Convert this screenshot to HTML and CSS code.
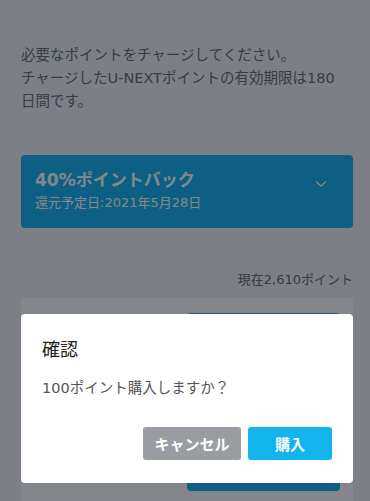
FILE: index.html
```html
<!doctype html>
<html lang="ja">
  <head>
    <meta charset="UTF-8" />
    <meta name="viewport" content="width=device-width, initial-scale=1.0" />
    <title>ポイントチャージ</title>
    <link rel="stylesheet" href="styles.css">
  </head>
  <body>
    <div class="page">
      <p class="intro">
        必要なポイントをチャージしてください。<br />
        チャージしたU-NEXTポイントの有効期限は180日間です。
      </p>

      <div class="campaign">
        <div class="campaign-text">
          <h2>40%ポイントバック</h2>
          <p>還元予定日:2021年5月28日</p>
        </div>
        <svg class="chevron" width="12" height="8" viewBox="0 0 12 8">
          <path d="M1 1.5 L6 6 L11 1.5" fill="none" stroke="currentColor" stroke-width="1.4" />
        </svg>
      </div>

      <p class="current">現在2,610ポイント</p>

      <div class="plans">
        <div class="plan-row">
          <button class="plan-btn"></button>
        </div>
      </div>
    </div>

    <!-- 確認ダイアログ -->
    <div class="overlay">
      <div class="dialog">
        <h3>確認</h3>
        <p>100ポイント購入しますか？</p>
        <div class="dialog-actions">
          <button class="btn btn-cancel">キャンセル</button>
          <button class="btn btn-buy">購入</button>
        </div>
      </div>
    </div>
  </body>
</html>
```

FILE: styles.css
```css
* {
  margin: 0;
  padding: 0;
  box-sizing: border-box;
}

body {
  font-family: "DejaVu Sans", "Noto Sans CJK JP", sans-serif;
  background: #f0f2f5;
  color: #555;
  height: 501px;
  overflow: hidden;
}

.page {
  padding: 44px 17px 0 21px;
}

.intro {
  font-size: 14.5px;
  line-height: 23px;
  color: #666a70;
  padding-right: 4px;
  margin-bottom: 42px;
}

.campaign {
  background: #12b2ee;
  border-radius: 4px;
  padding: 13px 14px 14px;
  display: flex;
  align-items: center;
  justify-content: space-between;
  color: #fff;
}

.campaign h2 {
  font-size: 17px;
  font-weight: 700;
  line-height: 24px;
}

.campaign p {
  font-size: 13px;
  line-height: 22px;
}

.chevron {
  margin-right: 12px;
  margin-top: -14px;
}

.current {
  text-align: right;
  font-size: 13px;
  color: #666;
  margin-top: 42px;
  line-height: 20px;
}

.plans {
  margin-top: 8px;
  background: #fff;
  height: 220px;
  padding: 15px 13px;
}

.plan-row {
  display: flex;
  justify-content: flex-end;
}

.plan-btn {
  width: 153px;
  height: 178px;
  border: none;
  border-radius: 4px;
  background: #12b2ee;
}

.overlay {
  position: fixed;
  inset: 0;
  background: rgba(8, 14, 24, 0.5);
  display: flex;
  align-items: flex-end;
  justify-content: center;
  padding: 0 17px 18px 21px;
}

.dialog {
  width: 332px;
  height: 169px;
  background: #fff;
  border-radius: 4px;
  padding: 23px 21px 0 21px;
}

.dialog h3 {
  font-size: 18px;
  font-weight: 400;
  color: #222;
  line-height: 26px;
}

.dialog p {
  font-size: 14.5px;
  color: #555;
  margin-top: 14px;
  line-height: 22px;
}

.dialog-actions {
  display: flex;
  justify-content: flex-end;
  gap: 7px;
  margin-top: 28px;
}

.btn {
  height: 33px;
  border: none;
  border-radius: 3px;
  color: #fff;
  font-family: inherit;
  font-size: 15px;
  font-weight: 700;
}

.btn-cancel {
  width: 98px;
  background: #999da2;
}

.btn-buy {
  width: 84px;
  background: #12b4ee;
}
```
